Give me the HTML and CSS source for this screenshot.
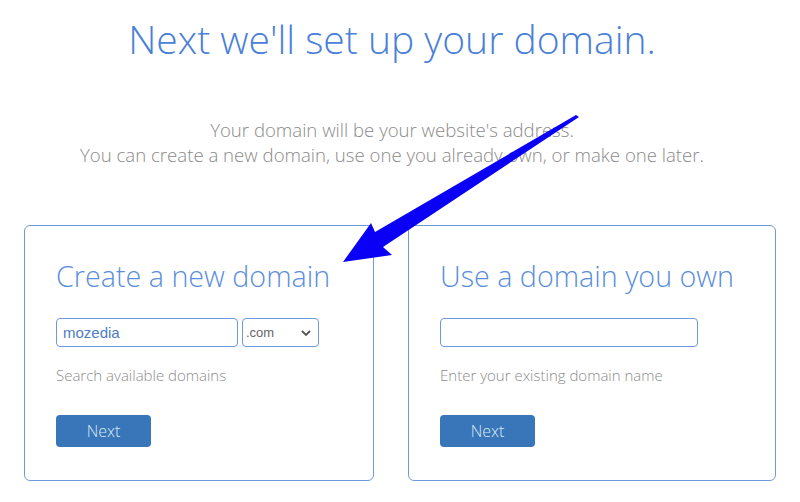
FILE: index.html
```html
<!DOCTYPE html>
<html lang="en">
<head>
  <meta charset="UTF-8" />
  <title>Set up your domain</title>
  <link rel="stylesheet" href="styles.css">
</head>
<body>
  <div class="page">
    <div class="intro">
      <h1>Next we'll set up your domain.</h1>
      <p>Your domain will be your website's address.<br>
      You can create a new domain, use one you already own, or make one later.</p>
    </div>

    <div class="cards">
      <div class="card">
        <h2>Create a new domain</h2>
        <div class="field-row">
          <input class="domain-input" type="text" value="mozedia">
          <div class="tld-select">
            <span>.com</span>
            <svg width="10" height="6" viewBox="0 0 10 6"><path d="M1 1l4 4 4-4" fill="none" stroke="#555" stroke-width="1.8"/></svg>
          </div>
        </div>
        <div class="hint">Search available domains</div>
        <button class="btn-next">Next</button>
      </div>

      <div class="card card-own">
        <h2>Use a domain you own</h2>
        <div class="field-row">
          <input class="domain-input own" type="text" value="">
        </div>
        <div class="hint">Enter your existing domain name</div>
        <button class="btn-next">Next</button>
      </div>
    </div>

    <!-- annotation arrow drawn over the page -->
    <svg class="arrow" width="800" height="502" viewBox="0 0 800 502">
      <polygon points="576,115 579,117 383,247 392,255 343,262 371,223 375,232" fill="#0a00f5"/>
    </svg>
  </div>
</body>
</html>
```

FILE: styles.css
```css
* {
  box-sizing: border-box;
}
body {
  margin: 0;
  background-color: #fff;
  font-family: 'Open Sans', sans-serif;
}
.page {
  position: relative;
  width: 800px;
  height: 502px;
  overflow: hidden;
}
.intro {
  text-align: center;
  padding-right: 16px;
}
.intro h1 {
  margin: 0;
  padding-top: 13px;
  font-size: 39px;
  font-weight: 300;
  color: #4a80d8;
  line-height: 52px;
}
.intro p {
  margin: 52px 0 0;
  font-size: 18.6px;
  font-weight: 300;
  line-height: 25px;
  color: #8a8a8a;
}
.cards {
  display: grid;
  grid-template-columns: 350px 368px;
  gap: 34px;
  padding: 0 24px;
  margin-top: 58px;
}
.card {
  height: 256px;
  border: 1px solid #6d9ad9;
  border-radius: 6px;
  padding: 30px 31px 0;
}
.card h2 {
  margin: 0;
  font-size: 28.7px;
  font-weight: 300;
  color: #5b8edb;
  line-height: 40px;
}
.field-row {
  display: flex;
  gap: 4px;
  margin-top: 22px;
}
.domain-input {
  width: 182px;
  height: 29px;
  border: 1px solid #6d9ad9;
  border-radius: 4px;
  padding: 0 6px;
  font-family: 'Liberation Sans', Arial, sans-serif;
  font-size: 15px;
  color: #4d7cc4;
  outline: none;
}
.domain-input.own {
  width: 258px;
}
.tld-select {
  width: 77px;
  height: 29px;
  border: 1px solid #6d9ad9;
  border-radius: 4px;
  display: flex;
  align-items: center;
  justify-content: space-between;
  padding: 0 7px 0 3px;
  font-family: 'Liberation Sans', Arial, sans-serif;
  font-size: 13px;
  color: #666;
}
.hint {
  margin-top: 17px;
  font-size: 15px;
  font-weight: 300;
  color: #8c8c8c;
  line-height: 22px;
}
.btn-next {
  display: block;
  margin-top: 29px;
  width: 95px;
  height: 32px;
  border: none;
  border-radius: 4px;
  background-color: #3876b9;
  color: #dbe8f6;
  font-family: 'Open Sans', sans-serif;
  font-size: 16px;
  font-weight: 300;
  cursor: pointer;
}
.arrow {
  position: absolute;
  top: 0;
  left: 0;
  pointer-events: none;
}
```
